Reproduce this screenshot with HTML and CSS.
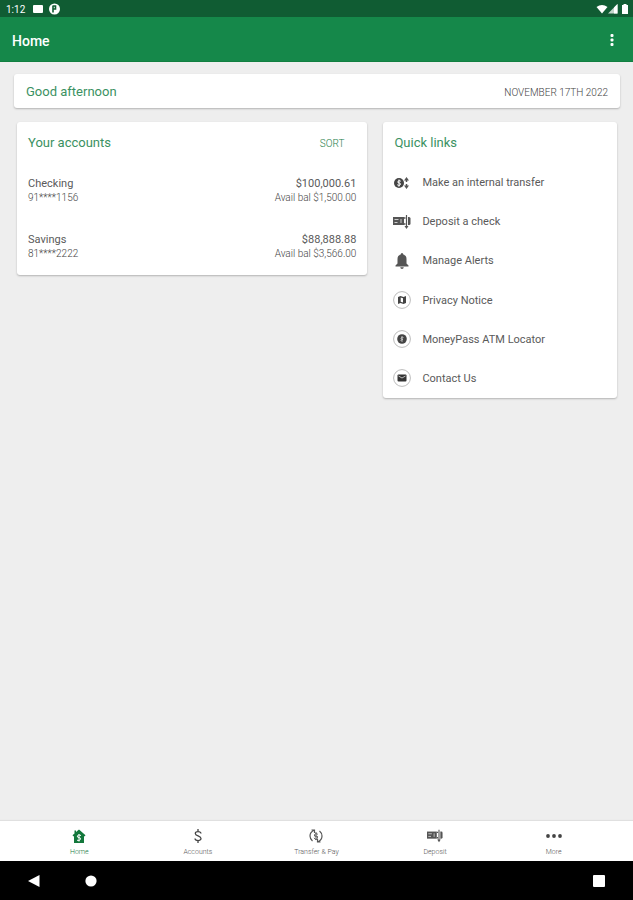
FILE: index.html
```html
<!DOCTYPE html>
<html lang="en">
<head>
<meta charset="utf-8">
<meta name="viewport" content="width=device-width, initial-scale=1">
<title>Home</title>
<link rel="stylesheet" href="styles.css">
</head>
<body>
<svg class="defs" aria-hidden="true">
  <defs>
    <symbol id="check" viewBox="0 0 18 16">
      <path d="M0 3h11v8H0z" fill="currentColor"/>
      <path d="M1.500 5.500h4M1.500 8.500h3M8 5v4" stroke="#ccc" fill="none"/>
      <path d="M11 4h1.500M11 10h1.500" stroke="currentColor" stroke-width="1.500" fill="none"/>
      <path d="M15 3h1q1.500 0 1.500 1.500v5Q17.500 11 16 11h-1z" fill="currentColor"/>
      <path d="M13.500 1v12" stroke="currentColor" stroke-width="1.200"/>
      <path d="M11.500 12h4l-2 3z" fill="currentColor"/>
    </symbol>
  </defs>
</svg>
<div class="status">
  <span class="clock">1:12</span>
  <svg class="notices" viewBox="0 0 29 12" fill="#fff" aria-hidden="true"><rect x="1" y="2" width="10" height="8" rx="1"/><circle cx="22.500" cy="6" r="5.500"/><path d="M21 2.500v7M21 3h2.500v3H21" stroke="#105c33" stroke-width="1.600" fill="none"/></svg>
  <svg class="signals" viewBox="0 0 34 12" fill="#fff" aria-hidden="true"><path d="M.5 4Q6 0 11.500 4L6 10.500z"/><path d="M21.500 1v9.500H12z" opacity=".75"/><path d="M21.500 1v9.500H18V4.500z"/><path d="M26 2h1.500V1h3v1H32v9h-6z"/></svg>
</div>
<header class="appbar">
  <h1>Home</h1>
  <button class="overflow" type="button" aria-label="More options"><svg viewBox="0 0 4 12" fill="#fff"><rect x=".5" y="0" width="3" height="3" rx="1"/><rect x=".5" y="4.500" width="3" height="3" rx="1"/><rect x=".5" y="9" width="3" height="3" rx="1"/></svg></button>
</header>
<main>
  <section class="card greeting"><h2>Good afternoon</h2><time datetime="2022-11-17">NOVEMBER 17TH 2022</time></section>
  <div class="columns">
    <section class="card accounts">
      <div class="card-head"><h2>Your accounts</h2><button class="sort" type="button">SORT</button></div>
      <a class="account" href="#checking">
        <span class="name">Checking</span><span class="name">$100,000.61</span>
        <span class="detail">91****1156</span><span class="detail">Avail bal $1,500.00</span>
      </a>
      <a class="account" href="#savings">
        <span class="name">Savings</span><span class="name">$88,888.88</span>
        <span class="detail">81****2222</span><span class="detail">Avail bal $3,566.00</span>
      </a>
    </section>
    <section class="card links">
      <div class="card-head"><h2>Quick links</h2></div>
      <nav class="link-list" aria-label="Quick links">
        <a href="#transfer"><svg viewBox="0 0 18 18"><circle cx="6" cy="9" r="5" fill="#444"/><path d="M7.800 7.200Q6 6 5 7.300T6.200 9 7 11 4.200 10.700M6 5.500v7" stroke="#fff" fill="none"/><path d="M13.500 3l2.500 3.500h-5zM13.500 15L11 11.500h5z" fill="#555"/><path d="M13.500 5v3M13.500 10v3" stroke="#555" stroke-width="1.500"/></svg>Make an internal transfer</a>
        <a href="#deposit"><svg class="deposit-icon" viewBox="0 0 18 16"><use href="#check"/></svg>Deposit a check</a>
        <a href="#alerts"><svg viewBox="0 0 18 18" fill="#555"><path d="M9 1q1.300 0 1.300 1.600 3.200 1 3.200 4.400v4.500l2 2v1h-13v-1l2-2V7q0-3.400 3.200-4.400Q7.700 1 9 1zM7.200 15.300h3.600Q10.600 17 9 17t-1.800-1.700z"/></svg>Manage Alerts</a>
        <a href="#privacy"><svg viewBox="0 0 18 18"><circle cx="9" cy="9" r="8.400" fill="#fff" stroke="#bbb"/><path d="M5 6l2.500-1 3 1L13 5v7l-2.500 1-3-1L5 13z" fill="#444"/><path d="M7.700 6.500l2.300.8v4.200l-2.300-.8z" fill="#fff"/></svg>Privacy Notice</a>
        <a href="#atm"><svg viewBox="0 0 18 18"><circle cx="9" cy="9" r="8.400" fill="#fff" stroke="#bbb"/><circle cx="9" cy="9" r="4.800" fill="#444"/><path d="M10.500 7.500Q8.500 6.500 8 8t1.500 1.200-2 1.300M9 6v6" stroke="#ccc" stroke-width=".8" fill="none"/></svg>MoneyPass ATM Locator</a>
        <a href="#contact"><svg viewBox="0 0 18 18"><circle cx="9" cy="9" r="8.400" fill="#fff" stroke="#bbb"/><rect x="4.500" y="5.500" width="9" height="7" rx="1" fill="#333"/><path d="M5.500 7L9 9l3.500-2" stroke="#ccc" stroke-width=".9" fill="none"/></svg>Contact Us</a>
      </nav>
    </section>
  </div>
</main>
<nav class="tabs" aria-label="Main">
  <a class="active" href="#home"><svg viewBox="0 0 16 16" fill="#13783c"><path d="M8 1.500l6.500 5.700-1 1.300-.5-.4V15H3V8.100l-.5.4-1-1.300L3.500 5.500V2.500H5v1.600z"/><path d="M10 7.500Q7.500 6.200 6.500 7.700T8 9.600t1.300 2-3.300.6M8 6v7.500" stroke="#fff" fill="none"/></svg>Home</a>
  <a href="#accounts"><svg viewBox="0 0 16 16" fill="none" stroke="#444" stroke-width="1.300"><path d="M11 5.500C10.700 3 5.300 2.800 5.300 5.500S11 7.700 11 10.500 5.200 13.200 5 10.500M8 1v2.500M8 12.500V15"/></svg>Accounts</a>
  <a href="#pay"><svg viewBox="0 0 16 16" fill="none" stroke="#555"><path d="M6 2.200Q2 4 2 8q0 3 2.500 5M10 13.800q4-1.800 4-5.800 0-3-2.500-5M3.500 2H6.500v3M12.500 14h-3v-3" stroke-width="1.200"/><path d="M9.800 6.200Q7 4.800 6.500 6.800T8.200 8.200t1 2.200-3-.6M8 4v8"/></svg>Transfer &amp; Pay</a>
  <a href="#deposit"><svg class="deposit-icon" viewBox="0 0 18 16"><use href="#check"/></svg>Deposit</a>
  <a href="#more"><svg viewBox="0 0 16 16" fill="#444"><circle cx="2" cy="8" r="1.900"/><circle cx="8" cy="8" r="1.900"/><circle cx="14" cy="8" r="1.900"/></svg>More</a>
</nav>
<div class="system">
  <button type="button" aria-label="Back"><svg viewBox="0 0 12 12" fill="#fff"><path d="M11.500 0v12L0 6z"/></svg></button>
  <button type="button" aria-label="System home"><svg viewBox="0 0 12 12" fill="#fff"><circle cx="6" cy="6" r="5.600"/></svg></button>
  <button class="recent" type="button" aria-label="Recent apps"><svg viewBox="0 0 12 12" fill="#fff"><rect width="12" height="12" rx="1"/></svg></button>
</div>
</body>
</html>
```
FILE: styles.css
```css
* { box-sizing: border-box; }
body {
  margin: 0;
  min-height: 100vh;
  display: flex;
  flex-direction: column;
  background: #eee;
  color: #5a5a5a;
  font-family: Roboto, "Liberation Sans", sans-serif;
  font-size: 11px;
  font-weight: 300;
}
h1, h2 { margin: 0; }
a { color: inherit; text-decoration: none; }
button { border: 0; padding: 0; background: none; font: inherit; color: inherit; }
svg { display: block; }
.defs { position: absolute; width: 0; height: 0; }

.status {
  display: flex;
  align-items: center;
  height: 17px;
  padding: 1px 3px 0 6px;
  background: #105c33;
  color: #fff;
}
.clock { font-size: 10px; font-weight: 400; }
.notices { width: 29px; height: 12px; margin-left: 7px; }
.signals { width: 34px; height: 12px; margin-left: auto; }

.appbar {
  display: flex;
  align-items: center;
  justify-content: space-between;
  height: 45px;
  padding: 3px 15px 0 12px;
  background: #15884a;
  border-bottom: 1px solid #117f40;
  color: #fff;
}
.appbar h1 { font-size: 14px; font-weight: 500; }
.overflow { padding: 3px 4px 5px; }
.overflow svg { width: 4px; height: 12px; }

main { flex: 1; padding: 12px 13px 12px 14px; }
.card {
  background: #fff;
  border-radius: 3px;
  box-shadow: 0 1px 2px rgba(0, 0, 0, .25);
}
.card h2 { font-size: 13px; font-weight: 400; line-height: 16px; color: #3b9162; }
.greeting {
  display: flex;
  align-items: center;
  justify-content: space-between;
  height: 34px;
  padding: 2px 12px 0;
}
.greeting time { font-size: 10px; color: #444; }
.columns {
  display: grid;
  grid-template-columns: 3fr 2fr;
  align-items: start;
  gap: 16px;
  padding: 14px 3px;
}
.card-head {
  display: flex;
  align-items: center;
  justify-content: space-between;
  height: 41px;
  padding: 1px 11px 0;
}
.sort { padding: 0 12px; font-size: 10px; color: #1d7d49; }
.account {
  display: grid;
  grid-template-columns: 1fr auto;
  align-content: center;
  height: 56px;
  padding: 0 11px;
}
.account span:nth-child(even) { text-align: right; }
.name { font-size: 11px; line-height: 14px; font-weight: 400; }
.detail { font-size: 10px; line-height: 14px; color: #444; }
.link-list { display: grid; grid-auto-rows: 1fr; min-height: 235px; }
.link-list a {
  display: flex;
  align-items: center;
  gap: 11px;
  padding: 0 10px;
  font-weight: 400;
}
.link-list svg { width: 18px; height: 18px; color: #555; }

.tabs {
  display: flex;
  height: 40px;
  padding: 1px 20px 0;
  background: #fff;
  box-shadow: 0 -1px 1px rgba(0, 0, 0, .06);
  color: #555;
}
.tabs a {
  flex: 1;
  display: flex;
  flex-direction: column;
  align-items: center;
  justify-content: center;
  gap: 4px;
  font-size: 7px;
  line-height: 8px;
}
.tabs svg { width: 16px; height: 16px; color: #555; }
.tabs .active { color: #13783c; }
.system {
  display: flex;
  align-items: center;
  gap: 45px;
  height: 39px;
  padding: 0 28px;
  background: #000;
}
.system svg { width: 12px; height: 12px; }
.recent { margin-left: auto; }
```
